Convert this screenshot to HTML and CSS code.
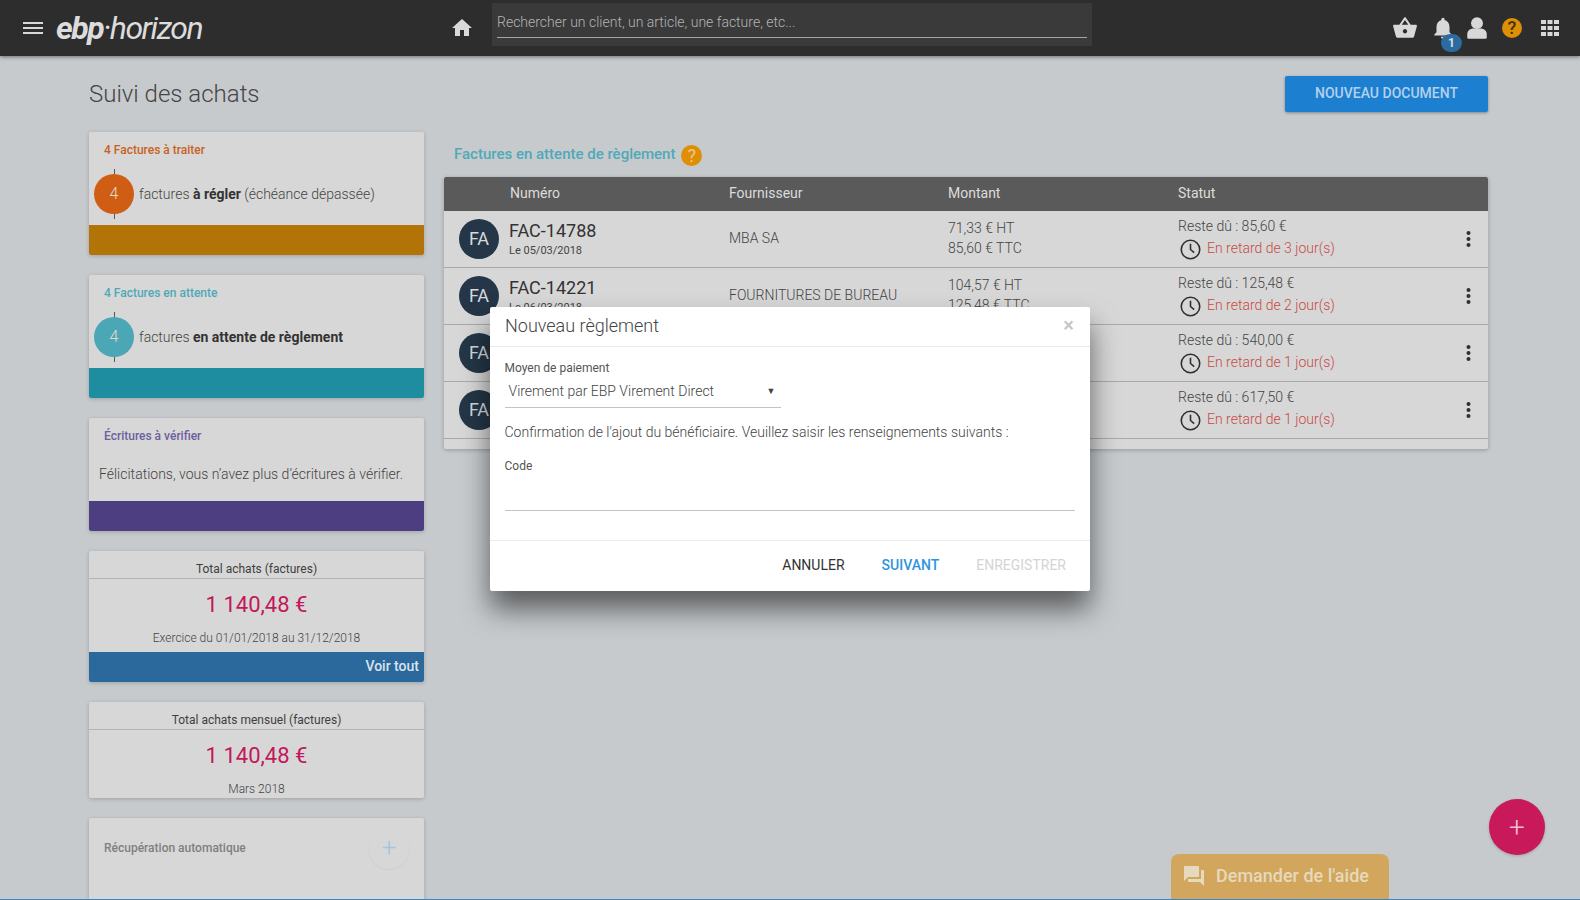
FILE: index.html
```html
<!DOCTYPE html>
<html lang="fr">
<head>
<meta charset="utf-8">
<title>Suivi des achats</title>
<link rel="stylesheet" href="styles.css">
</head>
<body>
<div class="app">
  <header class="topbar">
    <button class="burger" aria-label="Menu"><span></span><span></span><span></span></button>
    <div class="logo"><b>ebp</b>·<i>horizon</i></div>
    <svg class="home" viewBox="0 0 24 24"><path d="M10 20v-6h4v6h5v-8h3L12 3 2 12h3v8z"/></svg>
    <div class="search"><div class="search-input">Rechercher un client, un article, une facture, etc...</div></div>
    <div class="top-icons">
      <svg class="ti basket" viewBox="0 0 24 24"><path d="M17.21 9l-4.38-6.56c-.19-.28-.51-.42-.83-.42-.32 0-.64.14-.83.43L6.79 9H2c-.55 0-1 .45-1 1 0 .09.01.18.04.27l2.54 9.27c.23.84 1 1.46 1.92 1.46h13c.92 0 1.69-.62 1.93-1.46l2.54-9.27L23 10c0-.55-.45-1-1-1h-4.79zM9 9l3-4.4L15 9H9zm3 8c-1.1 0-2-.9-2-2s.9-2 2-2 2 .9 2 2-.9 2-2 2z"/></svg>
      <div class="bell">
        <svg class="ti" viewBox="0 0 24 24"><path d="M12 22c1.1 0 2-.9 2-2h-4c0 1.1.89 2 2 2zm6-6v-5c0-3.07-1.64-5.64-4.5-6.32V4c0-.83-.67-1.5-1.5-1.5s-1.5.67-1.5 1.5v.68C7.63 5.36 6 7.92 6 11v5l-2 2v1h16v-1l-2-2z"/></svg>
        <span class="badge">1</span>
      </div>
      <svg class="ti person" viewBox="0 0 24 24"><circle cx="12" cy="7.500" r="5.500"/><path d="M3 21v-3.500C3 14.500 6 12.500 8.500 12.500h7c2.500 0 5.500 2 5.500 5v3.500c0 .6-.9 1-2 1H5c-1.100 0-2-.4-2-1z"/></svg>
      <span class="help top-help">?</span>
      <svg class="apps" viewBox="0 0 18 16"><path d="M0 0h5v4H0zM6.500 0h5v4h-5zM13 0h5v4h-5zM0 6h5v4H0zM6.500 6h5v4h-5zM13 6h5v4h-5zM0 12h5v4H0zM6.500 12h5v4h-5zM13 12h5v4h-5z"/></svg>
    </div>
  </header>

  <main class="page">
    <div class="title-row">
      <h1>Suivi des achats</h1>
      <button class="new-doc">NOUVEAU DOCUMENT</button>
    </div>
    <div class="columns">
      <aside class="side">
        <section class="card task">
          <h3 class="c-orange">4 Factures à traiter</h3>
          <div class="task-line">
            <span class="count bg-orange">4</span>
            <p>factures <strong>à régler</strong> (échéance dépassée)</p>
          </div>
          <div class="bar bar-amber"></div>
        </section>
        <section class="card task">
          <h3 class="c-teal">4 Factures en attente</h3>
          <div class="task-line">
            <span class="count bg-teal">4</span>
            <p>factures <strong>en attente de règlement</strong></p>
          </div>
          <div class="bar bar-teal"></div>
        </section>
        <section class="card task short">
          <h3 class="c-purple">Écritures à vérifier</h3>
          <p class="congrats">Félicitations, vous n’avez plus d’écritures à vérifier.</p>
          <div class="bar bar-purple"></div>
        </section>
        <section class="card stat">
          <h4>Total achats (factures)</h4>
          <div class="amount">1 140,48 €</div>
          <div class="period">Exercice du 01/01/2018 au 31/12/2018</div>
          <div class="bar bar-blue">Voir tout</div>
        </section>
        <section class="card stat compact">
          <h4>Total achats mensuel (factures)</h4>
          <div class="amount">1 140,48 €</div>
          <div class="period">Mars 2018</div>
        </section>
        <section class="card recup">
          <h3>Récupération automatique</h3>
          <span class="recup-add">+</span>
        </section>
      </aside>

      <section class="content">
        <h2>Factures en attente de règlement <span class="help">?</span></h2>
        <div class="table">
          <div class="row head">
            <span></span><span>Numéro</span><span>Fournisseur</span><span>Montant</span><span>Statut</span><span></span>
          </div>
          <div class="row">
            <span class="avatar">FA</span>
            <div><div class="num">FAC-14788</div><div class="date">Le 05/03/2018</div></div>
            <div class="supplier">MBA SA</div>
            <div class="lines"><div>71,33 € HT</div><div>85,60 € TTC</div></div>
            <div class="status"><div>Reste dû : 85,60 €</div><div class="late"><svg class="clock" viewBox="0 0 20 20"><circle cx="10" cy="10" r="8.800"/><path d="M10 4.500V10l3.500 3"/></svg>En retard de 3 jour(s)</div></div>
            <svg class="kebab" viewBox="0 0 4 18"><circle cx="2" cy="3" r="2"/><circle cx="2" cy="9" r="2"/><circle cx="2" cy="15" r="2"/></svg>
          </div>
          <div class="row">
            <span class="avatar">FA</span>
            <div><div class="num">FAC-14221</div><div class="date">Le 06/03/2018</div></div>
            <div class="supplier">FOURNITURES DE BUREAU</div>
            <div class="lines"><div>104,57 € HT</div><div>125,48 € TTC</div></div>
            <div class="status"><div>Reste dû : 125,48 €</div><div class="late"><svg class="clock" viewBox="0 0 20 20"><circle cx="10" cy="10" r="8.800"/><path d="M10 4.500V10l3.500 3"/></svg>En retard de 2 jour(s)</div></div>
            <svg class="kebab" viewBox="0 0 4 18"><circle cx="2" cy="3" r="2"/><circle cx="2" cy="9" r="2"/><circle cx="2" cy="15" r="2"/></svg>
          </div>
          <div class="row">
            <span class="avatar">FA</span>
            <div></div><div></div><div></div>
            <div class="status"><div>Reste dû : 540,00 €</div><div class="late"><svg class="clock" viewBox="0 0 20 20"><circle cx="10" cy="10" r="8.800"/><path d="M10 4.500V10l3.500 3"/></svg>En retard de 1 jour(s)</div></div>
            <svg class="kebab" viewBox="0 0 4 18"><circle cx="2" cy="3" r="2"/><circle cx="2" cy="9" r="2"/><circle cx="2" cy="15" r="2"/></svg>
          </div>
          <div class="row">
            <span class="avatar">FA</span>
            <div></div><div></div><div></div>
            <div class="status"><div>Reste dû : 617,50 €</div><div class="late"><svg class="clock" viewBox="0 0 20 20"><circle cx="10" cy="10" r="8.800"/><path d="M10 4.500V10l3.500 3"/></svg>En retard de 1 jour(s)</div></div>
            <svg class="kebab" viewBox="0 0 4 18"><circle cx="2" cy="3" r="2"/><circle cx="2" cy="9" r="2"/><circle cx="2" cy="15" r="2"/></svg>
          </div>
        </div>
      </section>
    </div>
  </main>

  <button class="fab">+</button>
  <button class="help-tab">
    <svg viewBox="0 0 24 24"><path d="M21 6h-2v9H6v2c0 .55.45 1 1 1h11l4 4V7c0-.55-.45-1-1-1zm-4 6V3c0-.55-.45-1-1-1H3c-.55 0-1 .45-1 1v14l4-4h10c.55 0 1-.45 1-1z"/></svg>
    Demander de l'aide
  </button>
  <div class="bottom-line"></div>

  <div class="modal">
    <div class="modal-head"><span>Nouveau règlement</span><span class="close">×</span></div>
    <div class="modal-body">
      <div class="label">Moyen de paiement</div>
      <div class="select"><span>Virement par EBP Virement Direct</span><span class="arrow">▼</span></div>
      <p class="confirm">Confirmation de l'ajout du bénéficiaire. Veuillez saisir les renseignements suivants :</p>
      <div class="label">Code</div>
      <div class="code-input"></div>
    </div>
    <div class="modal-foot">
      <button class="act cancel">ANNULER</button>
      <button class="act next">SUIVANT</button>
      <button class="act off">ENREGISTRER</button>
    </div>
  </div>
</div>
</body>
</html>
```
FILE: styles.css
```css
* { box-sizing: border-box; }
html, body { margin: 0; height: 100%; }
body { font-family: Roboto, "Liberation Sans", sans-serif; color: #444; background: #c6cacd; overflow: hidden; }
button { font-family: inherit; border: 0; background: none; padding: 0; }
h1, h2, h3, h4 { margin: 0; font-weight: 400; }
p { margin: 0; }

.app { position: relative; width: 1580px; height: 900px; overflow: hidden; }

.topbar { height: 56px; background: #2d2d2d; display: flex; align-items: center; box-shadow: 0 1px 4px rgba(0,0,0,.45); position: relative; z-index: 1; }
.burger { width: 20px; margin-left: 23px; display: flex; flex-direction: column; gap: 3px; }
.burger span { height: 2px; background: #d8d8d8; }
.logo { margin-left: 13px; width: 394px; font-size: 32px; letter-spacing: -1.500px; color: #dcdcdc; font-style: italic; line-height: 56px; }
.logo b { font-weight: 700; }
.logo i { font-weight: 400; }
.home { width: 24px; height: 24px; fill: #dadada; flex: none; }
.search { margin-left: 18px; width: 600px; height: 43px; margin-top: -8px; background: #3a3a3a; padding: 0 5px; flex: none; }
.search-input { height: 35px; border-bottom: 1px solid #a5a5a5; font-size: 14px; font-weight: 300; color: #b4b4b4; line-height: 39px; }
.top-icons { display: flex; align-items: center; margin-left: 300px; }
.ti { width: 26px; height: 26px; fill: #d8d8d8; display: block; }
.bell { position: relative; margin-left: 12px; }
.badge { position: absolute; left: 11px; top: 19px; width: 21px; height: 18px; border-radius: 9px; background: #2c6aa0; color: #d5e0ea; font-size: 12px; font-weight: 700; text-align: center; line-height: 18px; }
.person { margin-left: 8px; }
.help { display: inline-block; width: 20px; height: 20px; border-radius: 50%; background: #de8f05; color: #3f3215; font-size: 18px; font-weight: 500; text-align: center; line-height: 20px; }
.top-help { margin-left: 12px; }
.apps { width: 18px; height: 16px; fill: #d8d8d8; margin-left: 19px; }

.page { padding: 20px 92px 0 89px; }
.title-row { display: flex; justify-content: space-between; align-items: center; height: 36px; }
h1 { font-size: 24px; font-weight: 300; color: #454545; }
.new-doc { width: 203px; height: 36px; background: #1d7fd0; color: #b3d1ec; font-size: 14px; font-weight: 500; border-radius: 2px; padding-bottom: 2px; box-shadow: 0 1px 3px rgba(0,0,0,.35); }

.columns { display: grid; grid-template-columns: 335px 1fr; gap: 20px; margin-top: 20px; }
.side { display: flex; flex-direction: column; gap: 20px; }
.card { background: #d7d7d7; border-radius: 2px; box-shadow: 0 1px 4px rgba(0,0,0,.2); overflow: hidden; }
.card h3 { font-size: 12px; font-weight: 500; padding: 11px 15px 0; line-height: 14px; }
.c-orange { color: #c8621e; }
.c-teal { color: #4fa9b8; }
.c-purple { color: #6d5f9f; }
.bg-orange { background: #cf5d13; }
.bg-teal { background: #4ba7b6; }

.task { height: 123px; display: flex; flex-direction: column; }
.task.short { height: 113px; }
.task-line { position: relative; z-index: 0; flex: 1; display: flex; align-items: center; padding: 0 0 0 5px; gap: 5px; font-size: 14px; font-weight: 300; color: #444; margin-top: 5px; }
.task-line strong { font-weight: 700; color: #333; }
.count { position: relative; flex: none; width: 40px; height: 40px; border-radius: 50%; color: #e9d9cc; font-size: 16px; text-align: center; line-height: 40px; }
.count::before { content: ""; position: absolute; left: 20px; top: -5px; width: 1px; height: 50px; background: #555; z-index: -1; }
.congrats { flex: 1; font-size: 14px; font-weight: 300; color: #444; padding: 23px 0 0 10px; }
.bar { height: 30px; flex: none; }
.bar-amber { background: #b37407; }
.bar-teal { background: #1e8d9f; }
.bar-purple { background: #4d3e81; }
.bar-blue { background: #2b689c; color: #d9e3ec; font-size: 14px; font-weight: 500; text-align: right; padding-right: 5px; line-height: 29px; }

.stat { text-align: center; }
.stat h4 { height: 28px; border-bottom: 1px solid #b4b4b4; font-size: 12px; font-weight: 400; color: #3e3e3e; overflow: hidden; line-height: 36px; }
.amount { font-size: 22px; color: #c2185b; line-height: 26px; margin-top: 13px; }
.period { font-size: 12px; font-weight: 300; color: #444; line-height: 14px; margin-top: 13px; height: 21px; }
.compact .period { height: 16px; }
.recup { position: relative; height: 90px; }
.recup h3 { color: #808080; padding-top: 23px; font-size: 12px; }
.recup-add { position: absolute; left: 280px; top: 11px; width: 40px; height: 40px; border-radius: 50%; color: #a7c3df; font-size: 26px; font-weight: 300; text-align: center; line-height: 36px; box-shadow: 0 1px 2px rgba(0,0,0,.05); }

h2 { font-size: 15px; font-weight: 500; color: #4fa9b8; margin-left: 10px; height: 45px; padding-top: 13px; }
h2 .help { width: 21px; height: 21px; margin-left: 2px; vertical-align: -3px; line-height: 21px; color: #efc98a; font-weight: 400; }
.table { background: #d7d7d7; border-radius: 2px; box-shadow: 0 1px 4px rgba(0,0,0,.25); padding-bottom: 10px; }
.row { display: grid; grid-template-columns: 66px 219px 219px 230px 1fr 38px; height: 57px; align-items: center; border-bottom: 1px solid #a9a9a9; font-size: 14px; font-weight: 300; color: #444; }
.row.head { height: 34px; background: #5a5a5a; border: 0; color: #dcdcdc; font-weight: 400; border-radius: 2px 2px 0 0; padding-bottom: 2px; }
.avatar { margin-left: 15px; width: 40px; height: 40px; border-radius: 50%; background: #243647; color: #d6dadd; font-size: 18px; text-align: center; line-height: 40px; font-weight: 400; }
.num { font-size: 18px; font-weight: 400; color: #333; line-height: 22px; margin: 1px 0 0 -1px; }
.date { font-size: 11px; font-weight: 400; color: #444; line-height: 17px; margin-left: -1px; }
.supplier, .lines { margin-top: -2px; }
.lines div { line-height: 20px; }
.status { font-weight: 300; color: #444; }
.status > div:first-child { line-height: 20px; margin-top: -2px; }
.late { display: flex; align-items: center; color: #c94a45; font-weight: 300; height: 24px; gap: 6px; }
.clock { width: 21px; height: 21px; fill: none; stroke: #2f2f2f; stroke-width: 1.500; flex: none; margin-left: 2px; margin-top: 2px; }
.kebab { width: 5px; height: 18px; fill: #2f2f2f; justify-self: center; margin-left: -2px; }

.fab { position: absolute; left: 1489px; top: 799px; width: 56px; height: 56px; border-radius: 50%; background: #c8195a; color: #ecc0cf; font-size: 28px; font-weight: 300; line-height: 56px; padding-top: 1px; box-shadow: 0 1px 3px rgba(0,0,0,.2); }
.help-tab { position: absolute; left: 1171px; top: 854px; width: 218px; height: 46px; background: #d2a65c; border-radius: 8px 8px 0 0; color: #e6d9bd; font-size: 18px; font-weight: 500; display: flex; align-items: center; padding: 0 0 4px 11px; gap: 10px; }
.help-tab svg { width: 24px; height: 24px; fill: #e6d9bd; flex: none; margin-top: 2px; }
.bottom-line { position: absolute; left: 0; right: 0; bottom: 0; height: 1px; background: #3a87c8; }

.modal { position: absolute; left: 490px; top: 307px; width: 600px; height: 284px; background: #fff; border-radius: 2px; box-shadow: 0 18px 28px rgba(0,0,0,.55); z-index: 2; display: flex; flex-direction: column; }
.modal-head { height: 40px; border-bottom: 1px solid #e9e9e9; display: flex; justify-content: space-between; align-items: center; padding: 0 15px 2px 15px; font-size: 18px; font-weight: 300; color: #444; flex: none; }
.close { font-size: 20px; color: #c6c6c6; font-weight: 500; margin-right: 1px; margin-top: -1px; }
.modal-body { flex: 1; padding: 13px 15px 0 14.500px; }
.label { font-size: 12px; color: #555; line-height: 16px; }
.select { width: 276px; height: 29px; border-bottom: 1px solid #c4c4c4; display: flex; justify-content: space-between; align-items: center; padding: 0 5px 5px 4px; font-size: 14px; font-weight: 300; color: #444; margin-top: 3px; }
.arrow { font-size: 9px; color: #444; font-weight: 400; }
.confirm { font-size: 14px; font-weight: 300; color: #444; line-height: 20px; margin: 14px 0 16px; }
.code-input { height: 37px; border-bottom: 1px solid #c4c4c4; }
.modal-foot { height: 51px; border-top: 1px solid #ececec; display: flex; justify-content: flex-end; align-items: center; gap: 37px; padding: 0 24px 2px 0; flex: none; }
.act { font-size: 14px; font-weight: 400; color: #333; }
.act.cancel { margin-right: 0; }
.act.next { color: #2e95dc; font-weight: 500; }
.act.off { color: #d4d4d4; }
```
